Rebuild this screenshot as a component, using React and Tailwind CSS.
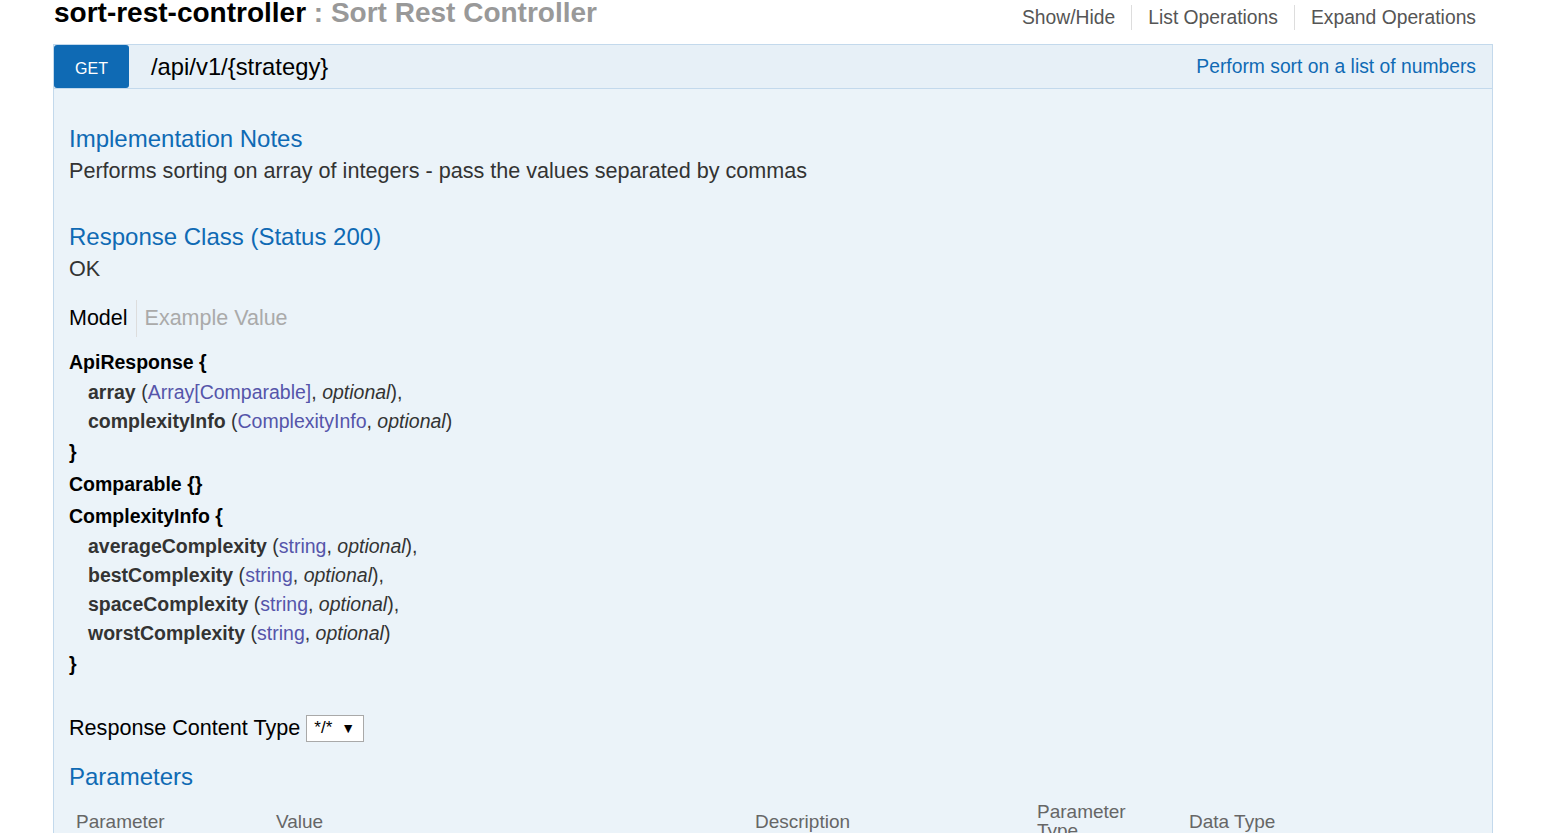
import React from "react";

const font = { fontFamily: '"Liberation Sans", Arial, sans-serif' };

const models = [
  {
    name: "ApiResponse",
    empty: false,
    props: [
      { name: "array", type: "Array[Comparable]", last: false },
      { name: "complexityInfo", type: "ComplexityInfo", last: true },
    ],
  },
  { name: "Comparable", empty: true, props: [] },
  {
    name: "ComplexityInfo",
    empty: false,
    props: [
      { name: "averageComplexity", type: "string", last: false },
      { name: "bestComplexity", type: "string", last: false },
      { name: "spaceComplexity", type: "string", last: false },
      { name: "worstComplexity", type: "string", last: true },
    ],
  },
];

const Model = ({ model, first }) => {
  if (model.empty) {
    return (
      <div className="mt-[3px] h-[29px] leading-[29px] font-bold text-black">
        {model.name} {"{}"}
      </div>
    );
  }
  return (
    <div className={first ? "" : "mt-[3px]"}>
      <div className="h-[29px] leading-[29px] font-bold text-black">{model.name} {"{"}</div>
      <div className="pl-[19px] text-[#333]">
        {model.props.map((p, i) => (
          <div key={p.name} className={`h-[29px] leading-[29px] ${i === 0 ? "mt-[1px]" : ""}`}>
            <span className="font-bold">{p.name}</span> (
            <span className="text-[#55a]">{p.type}</span>, <span className="italic">optional</span>){p.last ? "" : ","}
          </div>
        ))}
      </div>
      <div className="mt-[2px] h-[29px] leading-[29px] font-bold text-black">{"}"}</div>
    </div>
  );
};

const App = () => {
  return (
    <div className="min-h-screen bg-white overflow-hidden" style={font}>
      <div className="ml-[53px] w-[1440px]">
        {/* resource header */}
        <div className="flex items-start justify-between h-[44px]">
          <h2 className="mt-[-3px] ml-[1px] text-[28px] leading-[32px] font-bold text-black whitespace-nowrap">
            sort-rest-controller <span className="text-[#999]">: Sort Rest Controller</span>
          </h2>
          <ul className="flex items-center mt-[5px] text-[19.3px] leading-[25px] text-[#555]">
            <li className="px-4">Show/Hide</li>
            <li className="px-4 border-l border-[#ddd]">List Operations</li>
            <li className="pl-4 pr-[17px] border-l border-[#ddd]">Expand Operations</li>
          </ul>
        </div>

        {/* operation */}
        <div className="border border-[#c3d9ec] bg-[#ebf3f9]">
          <div className="flex items-center h-[44px] bg-[#e7f0f7] border-b border-[#c3d9ec]">
            <span className="flex items-center justify-center w-[75px] h-[43px] pt-[4px] bg-[#0f6ab4] text-white text-[16px] rounded-[3px] uppercase">
              GET
            </span>
            <span className="ml-[22px] text-[23.8px] text-black">/api/v1/{"{strategy}"}</span>
            <span className="ml-auto mr-[16px] pt-[1px] text-[19.3px] text-[#0f6ab4]">Perform sort on a list of numbers</span>
          </div>

          <div className="px-[15px] pt-[36px]">
            <h4 className="text-[24px] leading-[28px] text-[#0f6ab4]">Implementation Notes</h4>
            <p className="mt-[6px] text-[21.6px] leading-[24px] text-[#333]">
              Performs sorting on array of integers - pass the values separated by commas
            </p>

            <h4 className="mt-[40px] text-[24px] leading-[28px] text-[#0f6ab4]">Response Class (Status 200)</h4>
            <p className="mt-[6px] text-[21.6px] leading-[24px] text-[#333]">OK</p>

            <div className="mt-[19px] flex items-center h-[37px] text-[21.5px]">
              <span className="pr-[8px] text-black">Model</span>
              <span className="h-full border-l border-[#ddd]" />
              <span className="pl-[8px] text-[#aaa]">Example Value</span>
            </div>

            <div className="mt-[11px] text-[19.5px]">
              {models.map((m, i) => (
                <Model key={m.name} model={m} first={i === 0} />
              ))}
            </div>

            <div className="mt-[36px] flex items-center h-[26px] text-[21.6px] text-black">
              <span>Response Content Type</span>
              <span className="ml-[6px] flex items-center w-[58px] h-[27px] bg-white border border-[#a9a9a9] text-[17px] pl-[7px]">
                <span>*/*</span>
                <span className="ml-[9px] text-[14px]">▼</span>
              </span>
            </div>

            <h4 className="mt-[22px] text-[24px] leading-[28px] text-[#0f6ab4]">Parameters</h4>

            <table className="mt-[11px] text-[19px] leading-[19px] text-[#666] text-left border-collapse">
              <thead>
                <tr>
                  <th className="font-normal align-middle px-[7px] w-[200px]">Parameter</th>
                  <th className="font-normal align-middle px-[7px] w-[479px]">Value</th>
                  <th className="font-normal align-middle px-[7px] w-[282px]">Description</th>
                  <th className="font-normal align-middle px-[7px] w-[152px]">
                    <div className="w-[110px]">Parameter Type</div>
                  </th>
                  <th className="font-normal align-middle px-[7px] w-[200px]">Data Type</th>
                </tr>
              </thead>
            </table>
            <div className="h-[40px]" />
          </div>
        </div>
      </div>
    </div>
  );
};

export default App;
